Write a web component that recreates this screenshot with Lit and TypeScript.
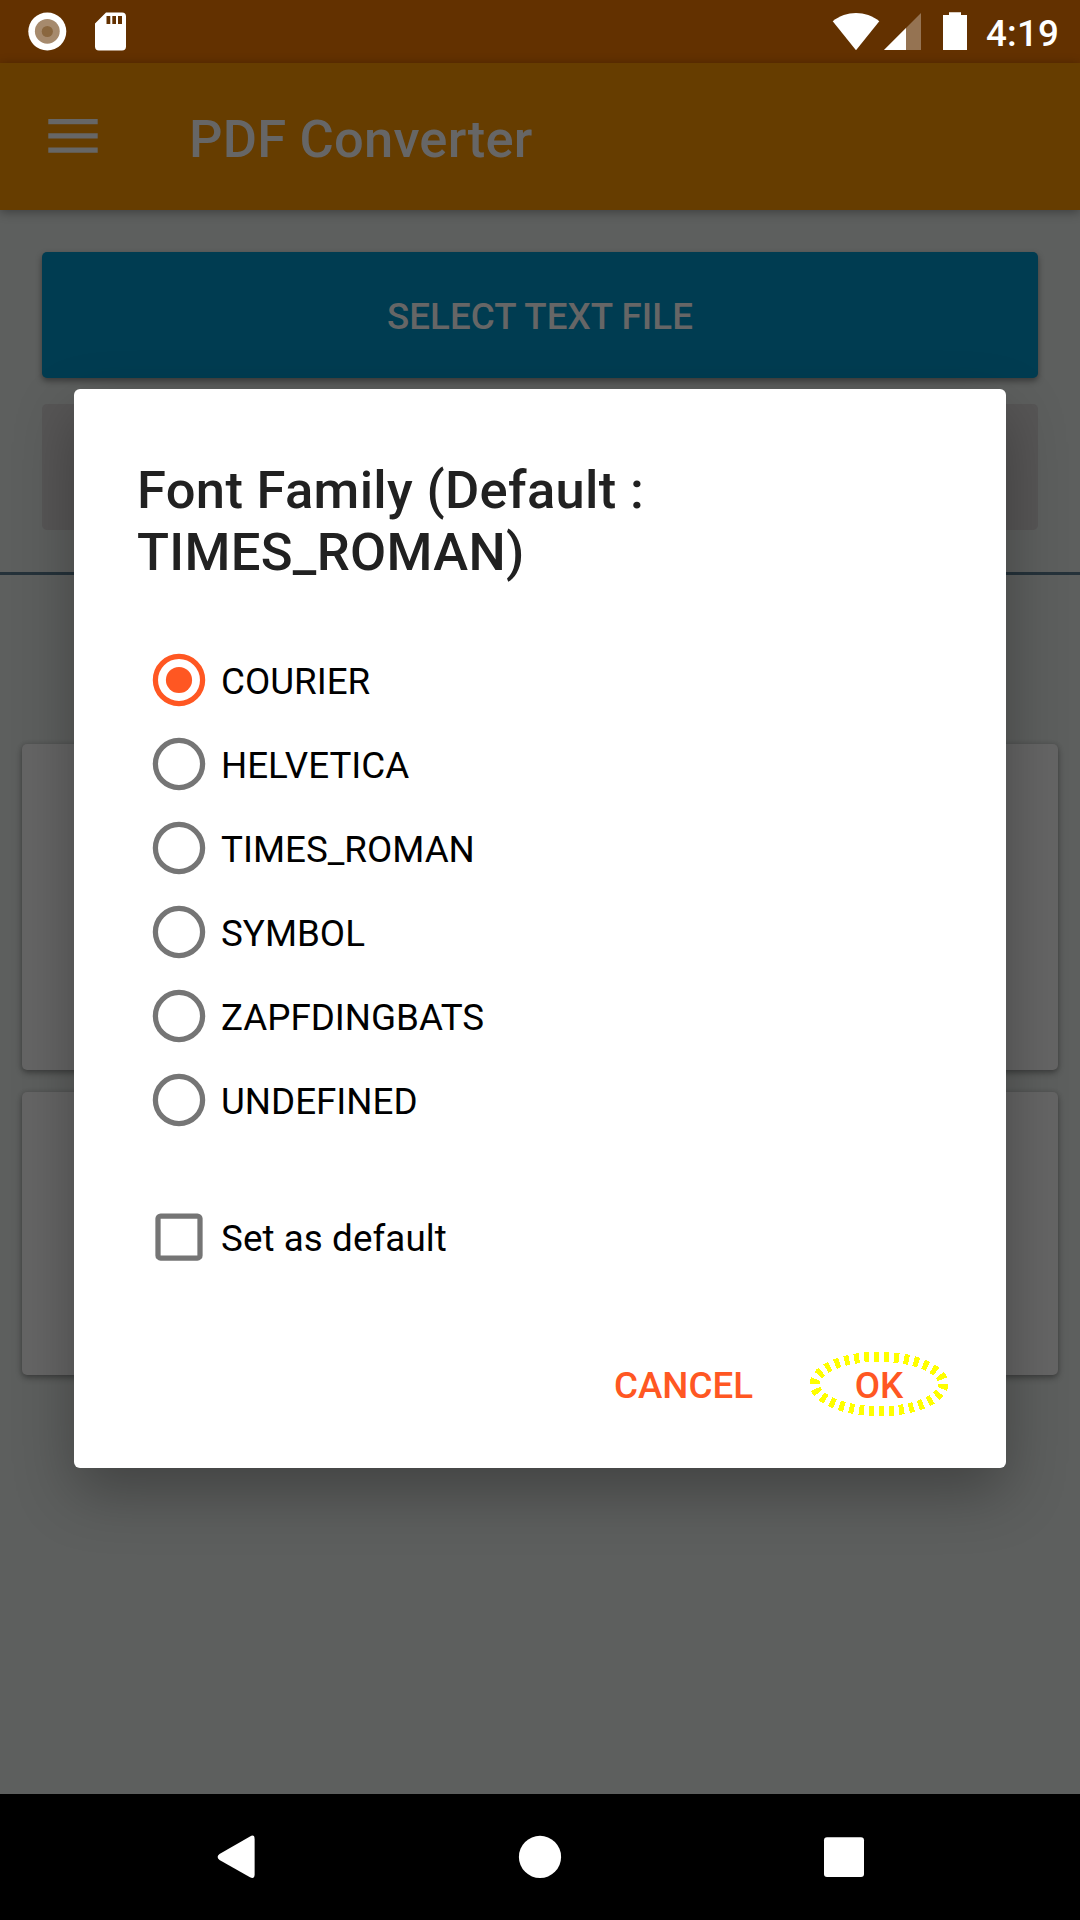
import { LitElement, html, css, svg } from "lit";
import { customElement, state } from "lit/decorators.js";

const FONTS = ["COURIER", "HELVETICA", "TIMES_ROMAN", "SYMBOL", "ZAPFDINGBATS", "UNDEFINED"];

@customElement("status-bar")
class StatusBar extends LitElement {
  static styles = css`
    :host { display: flex; justify-content: space-between; height: 63px; background: #633100; color: #fff; }
    svg { display: block; flex: none; }
    .left, .right { display: flex; align-items: flex-start; }
    .right { width: 252px; }
    .time { font: 500 36.75px/43px Roboto, sans-serif; letter-spacing: .2px; padding: 12px 0 0 18px; }
  `;
  render() {
    return html`
      <div class="left">
        <svg width="140" height="63" viewBox="0 0 140 63">
          <circle cx="47.3" cy="31.5" r="19" fill="#fff" />
          <circle cx="47.3" cy="31.3" r="12.4" fill="#a68a6d" />
          <circle cx="47.3" cy="31.5" r="5.6" fill="#8a673f" />
          <path fill="#fff" fill-rule="evenodd" d="M106 12.5H122Q126 12.5 126 16.5V46.5Q126 50.5 122 50.5H99Q95 50.5 95 46.5V23.5ZM106.5 16V24H110.3V16ZM112.3 16V24H116V16ZM118 16V24H122V16Z" />
        </svg>
      </div>
      <div class="right">
        <svg width="140" height="63" viewBox="828 0 140 63">
          <path fill="#fff" d="M832.7 21.3C846 10.2 866 10.2 879.3 21.3L856 50.3Z" />
          <path fill="#fff" fill-opacity=".32" d="M921 13V50H884Z" />
          <path fill="#fff" d="M906 28V50H884Z" />
          <path fill="#fff" d="M949 12.3H961V15H967V50H943V15H949Z" />
        </svg>
        <span class="time">4:19</span>
      </div>`;
  }
}

@customElement("converter-page")
class ConverterPage extends LitElement {
  static styles = css`
    :host { display: flex; flex-direction: column; height: 100%; background: #5d5f5e; }
    svg { display: block; flex: none; }
    .toolbar { display: flex; align-items: center; flex: none; height: 147px; background: #663d00; color: #666;
      box-shadow: 0 2px 10px rgba(0,0,0,.35); font: 500 52.5px/62px Roboto, sans-serif; letter-spacing: .2px; }
    .toolbar span { padding: 4px 0 0 42px; }
    .actions { display: flex; flex-direction: column; gap: 26px; padding: 42px 42px; }
    .button { height: 126px; border-radius: 5px; display: flex; align-items: center; justify-content: center;
      box-sizing: border-box; padding-top: 3px; font: 500 36.75px/43px Roboto, sans-serif; letter-spacing: .05px; color: #666; }
    .select { background: #003c51; box-shadow: 0 3px 6px rgba(0,0,0,.4); }
    .create { background: #575656; }
    .divider { flex: none; height: 3px; background: #25323a; }
    .cards { display: flex; flex-direction: column; gap: 22px; padding: 169px 22px 0; }
    .card { background: #656565; border-radius: 5px; box-shadow: 0 3px 6px rgba(0,0,0,.32), 0 0 5px rgba(0,0,0,.12); }
    .tall { height: 326px; }
    .short { height: 283px; }
  `;
  render() {
    return html`
      <header class="toolbar">
        <svg width="147" height="147" viewBox="0 0 147 147">
          <path fill="#666" d="M48.3 56H97.7V61.3H48.3ZM48.3 70.2H97.7V75.5H48.3ZM48.3 84.4H97.7V89.7H48.3Z" />
        </svg>
        <span>PDF Converter</span>
      </header>
      <div class="actions">
        <div class="button select">SELECT TEXT FILE</div>
        <div class="button create"></div>
      </div>
      <div class="divider"></div>
      <div class="cards">
        <div class="card tall"></div>
        <div class="card short"></div>
      </div>`;
  }
}

@customElement("font-dialog")
class FontDialog extends LitElement {
  @state() private selected = "COURIER";
  @state() private asDefault = false;

  static styles = css`
    :host { display: block; box-sizing: border-box; width: 932px; height: 1079px; padding-top: 70px; border-radius: 6px;
      background: #fff; box-shadow: 0 24px 60px rgba(0,0,0,.3); font: 400 36.75px/43px Roboto, sans-serif; color: #000; }
    svg { display: block; flex: none; }
    .title { margin: 0 63px 55px; font: 500 52.5px/62px Roboto, sans-serif; letter-spacing: .33px; color: #212121; }
    .row { display: flex; align-items: center; height: 84px; padding-left: 63px; cursor: pointer; }
    .row span { padding-top: 3px; }
    .check { margin-top: 53px; letter-spacing: .08px; }
    .buttons { display: flex; justify-content: flex-end; align-items: center; height: 126px; margin-top: 43px;
      padding-right: 47px; color: #ff5722; font-weight: 500; }
    .ok { position: relative; width: 160px; text-align: center; margin-left: 46px; }
    .ring { position: absolute; left: 8px; top: -16px; }
  `;
  private radio(on: boolean) {
    const c = on ? "#ff5722" : "#757575";
    return html`<svg width="84" height="84" viewBox="0 0 84 84">
      <circle cx="42" cy="42" r="23.6" fill="none" stroke=${c} stroke-width="5.25" />
      ${on ? svg`<circle cx="42" cy="42" r="13.1" fill=${c} />` : null}
    </svg>`;
  }
  render() {
    return html`
      <h2 class="title">Font Family (Default :<br />TIMES_ROMAN)</h2>
      ${FONTS.map((f) => html`<div class="row" @click=${() => (this.selected = f)}>
        ${this.radio(this.selected === f)}<span>${f}</span>
      </div>`)}
      <div class="row check" @click=${() => (this.asDefault = !this.asDefault)}>
        <svg width="84" height="84" viewBox="0 0 84 84">
          <rect x="21" y="21" width="42" height="42" rx="2.6" fill=${this.asDefault ? "#ff5722" : "none"} stroke="#757575" stroke-width="5.25" />
        </svg>
        <span>Set as default</span>
      </div>
      <div class="buttons">
        <span>CANCEL</span>
        <span class="ok">OK
          <svg class="ring" width="144" height="72" viewBox="0 0 144 72" shape-rendering="crispEdges">
            <ellipse cx="72" cy="36" rx="64.4" ry="27.2" fill="none" stroke="#ff0" stroke-width="10" stroke-dasharray="5 4.98" />
          </svg>
        </span>
      </div>`;
  }
}

@customElement("nav-bar")
class NavBar extends LitElement {
  static styles = css`
    :host { display: flex; justify-content: center; height: 126px; background: #000; }
    svg { display: block; }
  `;
  render() {
    return html`<svg width="1080" height="126" viewBox="0 0 1080 126" fill="#fff">
      <path d="M250 42.4Q254.6 40 254.6 45V80.5Q254.6 85.5 250 83.3L219.5 66Q215.7 63 219.5 60Z" />
      <circle cx="540" cy="62.9" r="21.1" />
      <rect x="824" y="43.2" width="40" height="39.8" rx="3" />
    </svg>`;
  }
}

@customElement("app-root")
class AppRoot extends LitElement {
  static styles = css`
    :host { display: flex; flex-direction: column; width: 1080px; height: 1920px; overflow: hidden; }
    status-bar, nav-bar { flex: none; }
    nav-bar { position: relative; }
    .content { position: relative; flex: 1; min-height: 0; }
    .overlay { position: absolute; inset: 0; display: flex; align-items: center; justify-content: center; }
  `;
  render() {
    return html`
      <status-bar></status-bar>
      <main class="content">
        <converter-page></converter-page>
        <div class="overlay"><font-dialog></font-dialog></div>
      </main>
      <nav-bar></nav-bar>`;
  }
}
